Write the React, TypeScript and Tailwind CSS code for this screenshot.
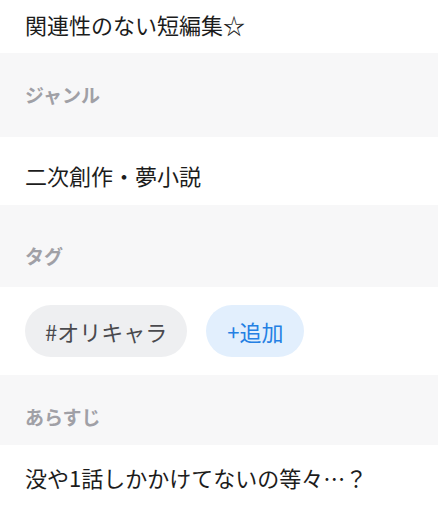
const font = { fontFamily: '"Noto Sans CJK JP", "Noto Sans", sans-serif' };

function Label({ text, className }: { text: string; className: string }) {
  return (
    <div className={`bg-[#f7f7f8] px-[25px] ${className}`}>
      <div className="text-[19px] leading-[19px] font-bold text-[#a0a0a6]">{text}</div>
    </div>
  );
}

function Value({ text, className }: { text: string; className: string }) {
  return (
    <div className={`bg-white px-[25px] ${className}`}>
      <div className="text-[22px] leading-[22px] text-[#1c1c1c]">{text}</div>
    </div>
  );
}

export default function App() {
  const tags = ["#オリキャラ"];

  return (
    <div className="w-[438px] h-[512px] overflow-hidden bg-white" style={font}>
      <Value text="関連性のない短編集☆" className="h-[53px] pt-[13px]" />
      <Label text="ジャンル" className="h-[84px] pt-[32px]" />
      <Value text="二次創作・夢小説" className="h-[68px] pt-[27px]" />
      <Label text="タグ" className="h-[82px] pt-[41px]" />

      <div className="h-[88px] bg-white px-[25px] pt-[18px] flex gap-[19px] items-start">
        {tags.map((t) => (
          <span
            key={t}
            className="h-[52px] px-[20px] rounded-full bg-[#eeeff1] text-[#4a4a4e] text-[22px] flex items-center"
          >
            {t}
          </span>
        ))}
        <button className="h-[52px] px-[21px] rounded-full bg-[#e2effd] text-[#2580e3] text-[22px] flex items-center">
          +追加
        </button>
      </div>

      <Label text="あらすじ" className="h-[70px] pt-[32px]" />
      <Value text="没や1話しかかけてないの等々…？" className="h-[67px] pt-[21px]" />
    </div>
  );
}
